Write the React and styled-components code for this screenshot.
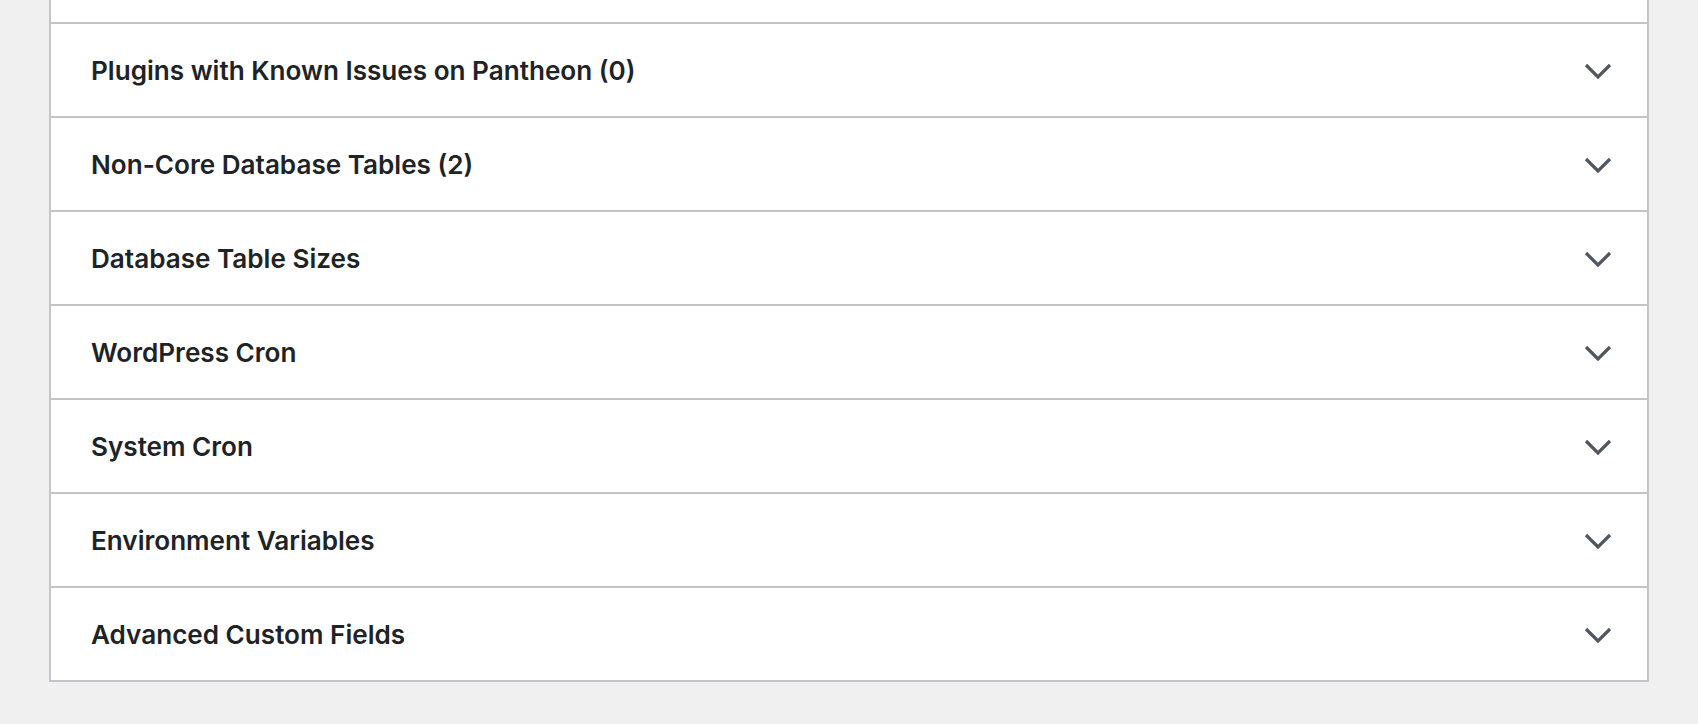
import React from "react";
import styled, { createGlobalStyle } from "styled-components";

const GlobalStyle = createGlobalStyle`
    html, body {
        margin: 0;
        padding: 0;
        background: #f0f0f1;
        font-family: Inter, "Noto Sans", "Liberation Sans", sans-serif;
    }
`;

const Page = styled.div`
    width: 1698px;
    height: 724px;
    overflow: hidden;
    background: #f0f0f1;
`;

const Accordion = styled.div`
    margin-left: 49px;
    width: 1600px;
    box-sizing: border-box;
    background: #fff;
    border: 2px solid #c3c4c7;
    border-top: none;
`;

const PrevItemTail = styled.div`
    height: 22px;
`;

const Item = styled.div`
    border-top: 2px solid #c3c4c7;
`;

const Trigger = styled.button`
    display: flex;
    align-items: center;
    justify-content: space-between;
    width: 100%;
    height: 92px;
    box-sizing: border-box;
    padding: 0 35px 0 40px;
    border: none;
    background: transparent;
    color: #1d2327;
    font-family: inherit;
    font-size: 26.1px;
    font-weight: 600;
    text-align: left;
    cursor: pointer;
`;

const Chevron = styled.svg`
    width: 28px;
    height: 17px;
    flex-shrink: 0;
    margin-top: 3px;
`;

const items = [
    "Plugins with Known Issues on Pantheon (0)",
    "Non-Core Database Tables (2)",
    "Database Table Sizes",
    "WordPress Cron",
    "System Cron",
    "Environment Variables",
    "Advanced Custom Fields",
];

const App = () => {
    return (
        <Page>
            <GlobalStyle />
            <Accordion>
                <PrevItemTail />
                {items.map(title => (
                    <Item key={title}>
                        <Trigger type="button" aria-expanded="false">
                            <span>{title}</span>
                            <Chevron viewBox="0 0 28 17" aria-hidden="true">
                                <polyline points="2,2 14,14 26,2" fill="none" stroke="#50575e" strokeWidth="3.2" strokeLinecap="butt" strokeLinejoin="miter" />
                            </Chevron>
                        </Trigger>
                    </Item>
                ))}
            </Accordion>
        </Page>
    );
};

export default App;
